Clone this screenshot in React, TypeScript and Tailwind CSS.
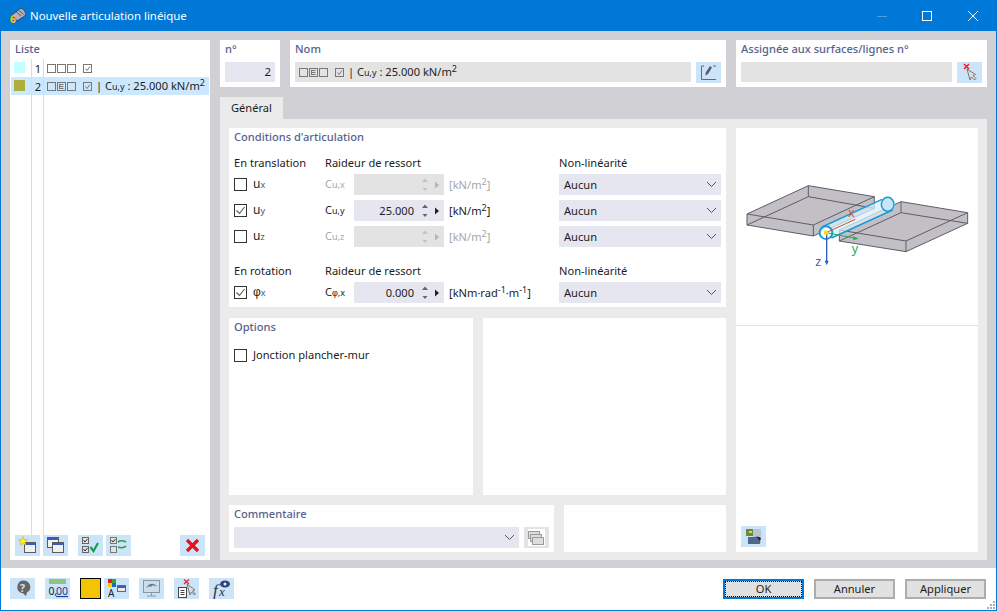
import React from "react";

const Lbl = ({ children }: { children: React.ReactNode }) => (
  <div className="h-[22px] px-[5px] leading-[18px] font-medium text-[#56628c] whitespace-nowrap">{children}</div>
);

const Boxes = ({ e }: { e?: boolean }) => (
  <svg width="46" height="11" viewBox="0 0 46 11" className="shrink-0">
    <g fill="none" stroke="#777" strokeWidth="1">
      <rect x="0.5" y="1.5" width="8" height="8" />
      <rect x="10.5" y="1.5" width="8" height="8" />
      <rect x="20.5" y="1.5" width="8" height="8" />
      <rect x="36.5" y="1.5" width="8" height="8" />
      <path d="M38.5 5.5l1.5 2 3-4" />
      {e && <path d="M12.5 3.5h4M12.5 5.5h4M12.5 7.5h4M12.5 3v5" />}
    </g>
  </svg>
);

const Cuy = () => (
  <span>
    C<span className="text-[9px]">u,y</span>
  </span>
);

const NameText = () => (
  <span className="ml-[3px] whitespace-nowrap">
    | <Cuy /> : 25.000 kN/m<sup className="text-[9px] -top-[4px] relative align-baseline">2</sup>
  </span>
);

const IconBtn = ({ children, bg = "bg-[#cce4f7]" }: { children?: React.ReactNode; bg?: string }) => (
  <div className={`w-[25px] h-[21px] shrink-0 ${bg} flex items-center justify-center`}>{children}</div>
);

const Win = ({ x, y, w = 11, h = 10 }: { x: number; y: number; w?: number; h?: number }) => (
  <g>
    <rect x={x + 0.5} y={y + 0.5} width={w} height={h} fill="#eef0f2" stroke="#5a5a60" />
    <rect x={x + 1} y={y + 1} width={w - 1} height="2" fill="#3c5ac0" />
  </g>
);

const S = ({ children }: { children: React.ReactNode }) => (
  <svg width="25" height="21" viewBox="0 0 25 21">{children}</svg>
);

const Check = ({ on }: { on?: boolean }) => (
  <div className="w-[13px] h-[13px] border border-[#333] bg-white flex items-center justify-center shrink-0">
    {on && (
      <svg width="11" height="11" viewBox="0 0 11 11">
        <path d="M1.5 5.5l3 3 5-6.5" fill="none" stroke="#555" strokeWidth="1.1" />
      </svg>
    )}
  </div>
);

const Chevron = () => (
  <svg width="11" height="7" viewBox="0 0 11 7">
    <path d="M1 1l4.5 4.5L10 1" fill="none" stroke="#555" strokeWidth="1" />
  </svg>
);

const Select = ({ w = "w-[162px]", text }: { w?: string; text?: string }) => (
  <div className={`${w} h-[21px] bg-[#e6e6f0] flex items-center justify-between pl-[5px] pr-[3px] shrink-0`}>
    <span>{text}</span>
    <span className="mr-[1px]">
      <Chevron />
    </span>
  </div>
);

const Spin = ({ value, off }: { value?: string; off?: boolean }) => (
  <div className={`w-[90px] h-[21px] shrink-0 flex items-center ${off ? "bg-[#e3e3e3]" : "bg-[#e6e6f0]"}`}>
    <div className="w-[60px] text-right">{value}</div>
    <svg width="30" height="21" viewBox="0 0 30 21">
      <path d="M8 8l3-3.500 3 3.500z M8.500 14l2.500 3 2.500-3z" fill={off ? "#c2c2c2" : "#666"} />
      <path d="M21 7.500l4 3.500-4 3.500z" fill={off ? "#b5b5b5" : "#222"} />
    </svg>
  </div>
);

const Row = ({
  on,
  sym,
  c,
  value,
  unit,
  off,
}: {
  on?: boolean;
  sym: React.ReactNode;
  c: React.ReactNode;
  value?: string;
  unit: React.ReactNode;
  off?: boolean;
}) => (
  <div className="flex items-center h-[21px] mb-[5px]">
    <div className="w-[91px] flex items-center gap-[6px] shrink-0">
      <Check on={on} />
      <span className="text-[12px]">{sym}</span>
    </div>
    <div className={`w-[29px] shrink-0 ${off ? "text-[#a6a6a6]" : ""}`}>{c}</div>
    <Spin value={value} off={off} />
    <div className={`w-[115px] shrink-0 pl-[5px] whitespace-nowrap ${off ? "text-[#a6a6a6]" : ""}`}>{unit}</div>
    <Select text="Aucun" />
  </div>
);

const Sym = ({ a, b }: { a: React.ReactNode; b: string }) => (
  <>
    {a}
    <span className="text-[9px] text-[#555]">{b}</span>
  </>
);

const Phi = () => <span className="font-['Liberation_Sans',sans-serif]">φ</span>;

const Sup = ({ children }: { children: React.ReactNode }) => (
  <sup className="text-[9px] relative -top-[4px] align-baseline">{children}</sup>
);

const HeadRow = ({ a }: { a: string }) => (
  <div className="flex items-center h-[18px] mb-[2px]">
    <div className="w-[91px] shrink-0">{a}</div>
    <div className="w-[234px] shrink-0">Raideur de ressort</div>
    <div>Non-linéarité</div>
  </div>
);

const Diagram = () => (
  <svg width="240" height="90" viewBox="0 0 720 270">
    <g stroke="#5f5c68" strokeWidth="3" strokeLinejoin="round">
      <path d="M33 102L217 17L415 50L415 85L232 168L33 135Z" fill="#c2c0c5" />
      <path d="M33 102L232 135L415 50M232 135V168M33 135L217 50L415 85M217 17V50" fill="none" />
      <path d="M310 150L495 65L695 98L695 130L510 215L310 183Z" fill="#c2c0c5" />
      <path d="M310 150L510 183L695 98M510 183V215M310 183L495 98L695 130M495 65V98" fill="none" />
    </g>
    <path d="M258 140L440 57A20 22 0 0 1 472 88L285 175Z" fill="#d8eff9" fillOpacity="0.75" />
    <path d="M258 141L438 58M286 174L470 90" stroke="#1c9ad6" strokeWidth="4.500" fill="none" />
    <ellipse cx="455" cy="73" rx="19" ry="21" fill="#c6e6f6" stroke="#1c9ad6" strokeWidth="4.500" />
    <circle cx="270" cy="158" r="19" fill="#fff" stroke="#1c9ad6" strokeWidth="6" />
    <path d="M270 158L358 118" stroke="#c2572e" strokeWidth="3" />
    <path d="M270 158L360 175" stroke="#2aa85a" strokeWidth="3" />
    <path d="M368 176l-16-7v12z" fill="#2aa85a" />
    <path d="M272 158V250" stroke="#2b5fc0" strokeWidth="4" />
    <path d="M272 256l-6-14h12z" fill="#2b5fc0" />
    <circle cx="270" cy="158" r="7" fill="#f5e020" />
    <text x="336" y="111" fontSize="38" fill="#c2572e" fontFamily="'Noto Sans',sans-serif">x</text>
    <text x="347" y="218" fontSize="38" fill="#2aa85a" fontFamily="'Noto Sans',sans-serif">y</text>
    <text x="238" y="258" fontSize="38" fill="#3a5fc0" fontFamily="'Noto Sans',sans-serif">z</text>
  </svg>
);

export default function App() {
  return (
    <div className="w-[997px] h-[611px] border border-[#0078d7] bg-white flex flex-col overflow-hidden font-['Noto_Sans',sans-serif] text-[11.1px] leading-[16px] text-[#1c1c1c]">
      {/* Title bar */}
      <div className="h-[30px] shrink-0 bg-[#0078d7] flex items-center text-white">
        <svg width="18" height="18" viewBox="0 0 18 18" className="ml-[8px] mr-[3px]">
          <path d="M3 8L11 1.500C13 1 16 3 16.500 6.500C16.500 8 16 9 15 9.500L8 14Z" fill="#aeb0bc" stroke="#3e4250" strokeWidth="1" />
          <path d="M7 4.500L12 9M9.500 3L14.500 7.500" stroke="#3e4250" strokeWidth="0.800" fill="none" />
          <text x="1" y="16" fontSize="10" fontWeight="800" fill="#f2c21c" fontFamily="'Noto Sans',sans-serif">6</text>
        </svg>
        <span className="text-[11.4px]">Nouvelle articulation linéique</span>
        <div className="ml-auto flex items-center">
          <div className="w-[10px] h-px bg-[#4da1e3] mr-[35px]" />
          <div className="w-[10px] h-[10px] border border-white mr-[36px]" />
          <svg width="10" height="10" viewBox="0 0 10 10" className="mr-[18px]">
            <path d="M0 0l10 10M10 0L0 10" stroke="#fff" strokeWidth="1" />
          </svg>
        </div>
      </div>

      {/* Main */}
      <div className="h-[537px] shrink-0 bg-[#d0d0d5] pt-[9px] px-[9px] flex gap-[10px]">
        {/* List */}
        <div className="w-[200px] h-[520px] bg-white flex flex-col shrink-0">
          <div className="h-[19px] px-[5px] leading-[18px] font-medium text-[#56628c]">Liste</div>
          <div className="flex h-[18px] ml-px items-center">
            <div className="w-[21px] h-full border-r border-[#dcdcdc] pl-[3px] pt-[3px]">
              <div className="w-[11px] h-[11px] bg-[#c4ffff]" />
            </div>
            <div className="w-[12px] h-full border-r border-[#dcdcdc] text-right pr-[2px] leading-[19px]">1</div>
            <div className="pl-[3px]">
              <Boxes />
            </div>
          </div>
          <div className="flex h-[18px] mx-px bg-[#cce8ff] items-center">
            <div className="w-[21px] h-full border-r border-[#dcdcdc] pl-[3px] pt-[3px]">
              <div className="w-[11px] h-[11px] bg-[#aeae3e]" />
            </div>
            <div className="w-[12px] h-full border-r border-[#dcdcdc] text-right pr-[2px] leading-[19px]">2</div>
            <div className="pl-[3px] flex items-center">
              <Boxes e />
              <NameText />
            </div>
          </div>
          <div className="flex h-[440px] ml-px">
            <div className="w-[21px] border-r border-[#dcdcdc]" />
            <div className="w-[12px] border-r border-[#dcdcdc]" />
          </div>
          <div className="flex pl-[5px] items-center">
            <IconBtn>
              <S>
                <Win x={9} y={7} w={11} h={10} />
                <path d="M8 1.500l1.300 3 3.200.300-2.400 2.200.700 3.200L8 8.500l-2.800 1.700.700-3.200L3.500 4.800l3.200-.300z" fill="#f8f020" stroke="#b9a820" strokeWidth=".5" />
              </S>
            </IconBtn>
            <div className="w-[3px]" />
            <IconBtn>
              <S>
                <Win x={4} y={2} />
                <Win x={9} y={7} />
              </S>
            </IconBtn>
            <div className="w-[10px]" />
            <IconBtn>
              <S>
                <g fill="#dfe3e8" stroke="#666">
                  <rect x="4.500" y="2.500" width="6" height="6" />
                  <rect x="4.500" y="11.500" width="6" height="6" />
                </g>
                <path d="M5.500 5l1.500 2 2.500-3M5.500 14l1.500 2 2.500-3" fill="none" stroke="#333" />
                <path d="M12.500 12l3 4 4.500-8" fill="none" stroke="#14a050" strokeWidth="2.200" />
              </S>
            </IconBtn>
            <div className="w-[3px]" />
            <IconBtn>
              <S>
                <g fill="#dfe3e8" stroke="#777">
                  <rect x="4.500" y="2.500" width="6" height="6" />
                  <rect x="4.500" y="11.500" width="6" height="6" />
                </g>
                <path d="M5.500 5l1.500 2 2.500-3" fill="none" stroke="#333" />
                <path d="M12 7c2-1.500 5-1.500 8 0M20 11c-2 2-5 2-8 1" fill="none" stroke="#22a050" strokeWidth="1.600" />
              </S>
            </IconBtn>
            <div className="w-[49px]" />
            <IconBtn>
              <S>
                <path d="M7 5l11 11M18 5L7 16" stroke="#e8101c" strokeWidth="3.200" />
              </S>
            </IconBtn>
          </div>
        </div>

        {/* Right column */}
        <div className="w-[767px] shrink-0 flex flex-col">
          <div className="flex gap-[10px] h-[47px]">
            <div className="w-[60px] bg-white shrink-0">
              <Lbl>n°</Lbl>
              <div className="mx-[5px] h-[20px] bg-[#e6e6f0] text-right pr-[4px] leading-[20px] text-[11.5px]">2</div>
            </div>
            <div className="w-[436px] bg-white shrink-0">
              <Lbl>Nom</Lbl>
              <div className="flex px-[5px] gap-[5px]">
                <div className="w-[396px] h-[20px] bg-[#e3e3e3] flex items-center pl-[4px]">
                  <Boxes e />
                  <NameText />
                </div>
                <IconBtn>
                  <svg width="25" height="21" viewBox="0 0 25 21">
                    <path d="M8 4H5.500V17.500H8M8 17.500H20" fill="none" stroke="#667" />
                    <path d="M17 4h3" stroke="#667" />
                    <path d="M14 4l2 1.500-4 6.500-2.500 1.500.300-3z" fill="#5a5a68" />
                  </svg>
                </IconBtn>
              </div>
            </div>
            <div className="w-[251px] bg-white shrink-0">
              <Lbl>Assignée aux surfaces/lignes n°</Lbl>
              <div className="flex px-[5px] gap-[5px]">
                <div className="w-[211px] h-[20px] bg-[#e3e3e3]" />
                <IconBtn>
                  <svg width="25" height="21" viewBox="0 0 25 21">
                    <path d="M10 7l3 11 1.500-3 3 3 1.500-1.500-3-3 2.500-1z" fill="#ddd" stroke="#777" />
                    <path d="M7 2l5 5M12 2L7 7" stroke="#e8202c" strokeWidth="1.500" />
                  </svg>
                </IconBtn>
              </div>
            </div>
          </div>

          <div className="mt-[10px] w-[63px] h-[22px] bg-[#ebebeb] pl-[11px] leading-[22px]">Général</div>

          <div className="h-[441px] bg-[#ebebeb] pt-[9px] px-[9px] pb-[8px] flex gap-[10px]">
            <div className="w-[497px] shrink-0 flex flex-col">
              {/* Conditions */}
              <div className="h-[179px] bg-white px-[5px]">
                <div className="h-[18px] leading-[18px] font-medium text-[#56628c]">Conditions d'articulation</div>
                <div className="h-[8px]" />
                <HeadRow a="En translation" />
                <Row
                  off
                  sym={<Sym a="u" b="x" />}
                  c={<><span>C</span><span className="text-[9px]">u,x</span></>}
                  unit={<>[kN/m<Sup>2</Sup>]</>}
                />
                <Row
                  on
                  sym={<Sym a="u" b="y" />}
                  c={<Cuy />}
                  value="25.000"
                  unit={<>[kN/m<Sup>2</Sup>]</>}
                />
                <Row
                  off
                  sym={<Sym a="u" b="z" />}
                  c={<><span>C</span><span className="text-[9px]">u,z</span></>}
                  unit={<>[kN/m<Sup>2</Sup>]</>}
                />
                <div className="h-[10px]" />
                <HeadRow a="En rotation" />
                <Row
                  on
                  sym={<Sym a={<Phi />} b="x" />}
                  c={<><span>C</span><span className="text-[9px]"><Phi />,x</span></>}
                  value="0.000"
                  unit={<>[kNm·rad<Sup>-1</Sup>·m<Sup>-1</Sup>]</>}
                />
              </div>

              <div className="mt-[11px] flex gap-[10px] h-[177px]">
                <div className="w-[244px] bg-white">
                  <div className="h-[18px] px-[5px] leading-[18px] font-medium text-[#56628c]">Options</div>
                  <div className="flex items-center gap-[6px] px-[5px] mt-[11px]">
                    <Check />
                    <span>Jonction plancher-mur</span>
                  </div>
                </div>
                <div className="w-[243px] bg-white" />
              </div>

              <div className="mt-[10px] flex gap-[10px] h-[47px]">
                <div className="w-[325px] bg-white">
                  <Lbl>Commentaire</Lbl>
                  <div className="flex px-[5px] gap-[5px]">
                    <Select w="w-[285px]" />
                    <IconBtn bg="bg-[#e3e3e3]">
                      <svg width="25" height="21" viewBox="0 0 25 21">
                        <rect x="4" y="2" width="17" height="17" fill="#fff" />
                        <g fill="#ddd" stroke="#999">
                          <rect x="4.500" y="4.500" width="11" height="7" />
                          <rect x="6.500" y="7.500" width="11" height="7" />
                          <rect x="8.500" y="10.500" width="11" height="7" />
                        </g>
                      </svg>
                    </IconBtn>
                  </div>
                </div>
                <div className="w-[162px] bg-white" />
              </div>
            </div>

            {/* Picture panel */}
            <div className="w-[242px] h-[424px] bg-white flex flex-col">
              <div className="h-[198px] border-b border-[#e3e3e3] pt-[52px]">
                <Diagram />
              </div>
              <div className="flex-1 flex items-end pl-[5px] pb-[5px]">
                <IconBtn>
                  <S>
                    <rect x="5" y="3" width="9" height="7" fill="#6c8a3a" />
                    <rect x="8" y="5" width="3" height="2" fill="#e8d040" />
                    <rect x="12" y="3" width="8" height="14" fill="#b8c4d4" />
                    <rect x="7" y="11" width="12" height="7" fill="#50688c" />
                    <path d="M15 10l4 5 1-3z" fill="#223" />
                  </S>
                </IconBtn>
              </div>
            </div>
          </div>
        </div>
      </div>

      {/* Footer */}
      <div className="flex-1 flex items-start pl-[9px] pt-[10px] relative">
        <IconBtn>
          <S>
            <path d="M13 2.500a7 6.500 0 0 1 4 12l-1 3.500-3.500-3h-1a6.500 6.500 0 0 1 1.500-12.500z" fill="#666" />
            <text x="10" y="13.500" fontSize="10.500" fontWeight="700" fill="#cce4f7" fontFamily="'Noto Sans',sans-serif">?</text>
          </S>
        </IconBtn>
        <div className="w-[10px]" />
        <IconBtn>
          <S>
            <rect x="4" y="1" width="17" height="5" fill="#93c47d" />
            <text x="3.500" y="17" fontSize="10.500" fill="#222" fontFamily="'Noto Sans',sans-serif">0,</text>
            <text x="11" y="17" fontSize="10.500" fill="#1c3a94" textDecoration="underline" fontFamily="'Noto Sans',sans-serif">00</text>
          </S>
        </IconBtn>
        <div className="w-[10px]" />
        <div className="w-[21px] h-[21px] bg-[#f5c400] border border-black shrink-0" />
        <div className="w-[3px]" />
        <IconBtn>
          <S>
            <rect x="4" y="1" width="4" height="4" fill="#d22" />
            <rect x="8" y="1" width="4" height="4" fill="#3a3" />
            <rect x="4" y="5" width="4" height="4" fill="#fc0" />
            <rect x="8" y="5" width="4" height="4" fill="#26c" />
            <text x="4" y="19" fontSize="10" fill="#222" fontFamily="'Noto Sans',sans-serif">A</text>
            <rect x="13.500" y="7.500" width="8" height="6" fill="#e8e8ee" stroke="#667" />
            <rect x="14" y="8" width="7" height="2" fill="#3c5ac0" />
          </S>
        </IconBtn>
        <div className="w-[10px]" />
        <IconBtn>
          <S>
            <rect x="4.500" y="2.500" width="16" height="12" fill="#cfdcea" stroke="#8894a0" />
            <path d="M7 10c3-5 8-6 11-1-3-2-5-2-6 0-2-1-3 0-5 1z" fill="#5b7ea0" />
            <path d="M12.500 14.500v3M8 18h9" stroke="#8894a0" />
          </S>
        </IconBtn>
        <div className="w-[10px]" />
        <IconBtn>
          <S>
            <rect x="4.500" y="9.500" width="8" height="10" fill="#fff" stroke="#444" />
            <path d="M6.500 12.500h4M6.500 14.500h4M6.500 16.500h4" stroke="#444" />
            <path d="M13 6l3 11 1.500-3 3 3 1-1-3-3 2.500-1z" fill="#ddd" stroke="#777" />
            <path d="M10 1.500l5 4.500M15 1.500l-5 4.500" stroke="#e8202c" strokeWidth="1.300" />
          </S>
        </IconBtn>
        <div className="w-[10px]" />
        <IconBtn>
          <S>
            <text x="4" y="18" fontSize="17" fontStyle="italic" fill="#333" fontFamily="'Liberation Serif',serif">f</text>
            <text x="10" y="18" fontSize="13" fontStyle="italic" fill="#333" fontFamily="'Liberation Serif',serif">x</text>
            <ellipse cx="16" cy="6" rx="5" ry="3.500" fill="#33407a" />
            <circle cx="16" cy="6" r="1.500" fill="#cfe" />
          </S>
        </IconBtn>

        <div className="ml-auto flex gap-[10px] pt-px pr-[10px]">
          <div className="w-[81px] h-[20px] bg-[#e1e1e1] border-2 border-[#0078d7] flex items-center justify-center">
            <div className="w-full h-full border border-dotted border-black flex items-center justify-center">OK</div>
          </div>
          <div className="w-[81px] h-[20px] bg-[#e1e1e1] border-2 border-[#adadad] flex items-center justify-center">Annuler</div>
          <div className="w-[81px] h-[20px] bg-[#e1e1e1] border-2 border-[#adadad] flex items-center justify-center">Appliquer</div>
        </div>
        <svg width="9" height="9" viewBox="0 0 9 9" className="absolute right-0 bottom-0">
          <g fill="#b0b0b0">
            <rect x="6" y="0" width="2" height="2" />
            <rect x="3" y="3" width="2" height="2" />
            <rect x="6" y="3" width="2" height="2" />
            <rect x="0" y="6" width="2" height="2" />
            <rect x="3" y="6" width="2" height="2" />
            <rect x="6" y="6" width="2" height="2" />
          </g>
        </svg>
      </div>
    </div>
  );
}
